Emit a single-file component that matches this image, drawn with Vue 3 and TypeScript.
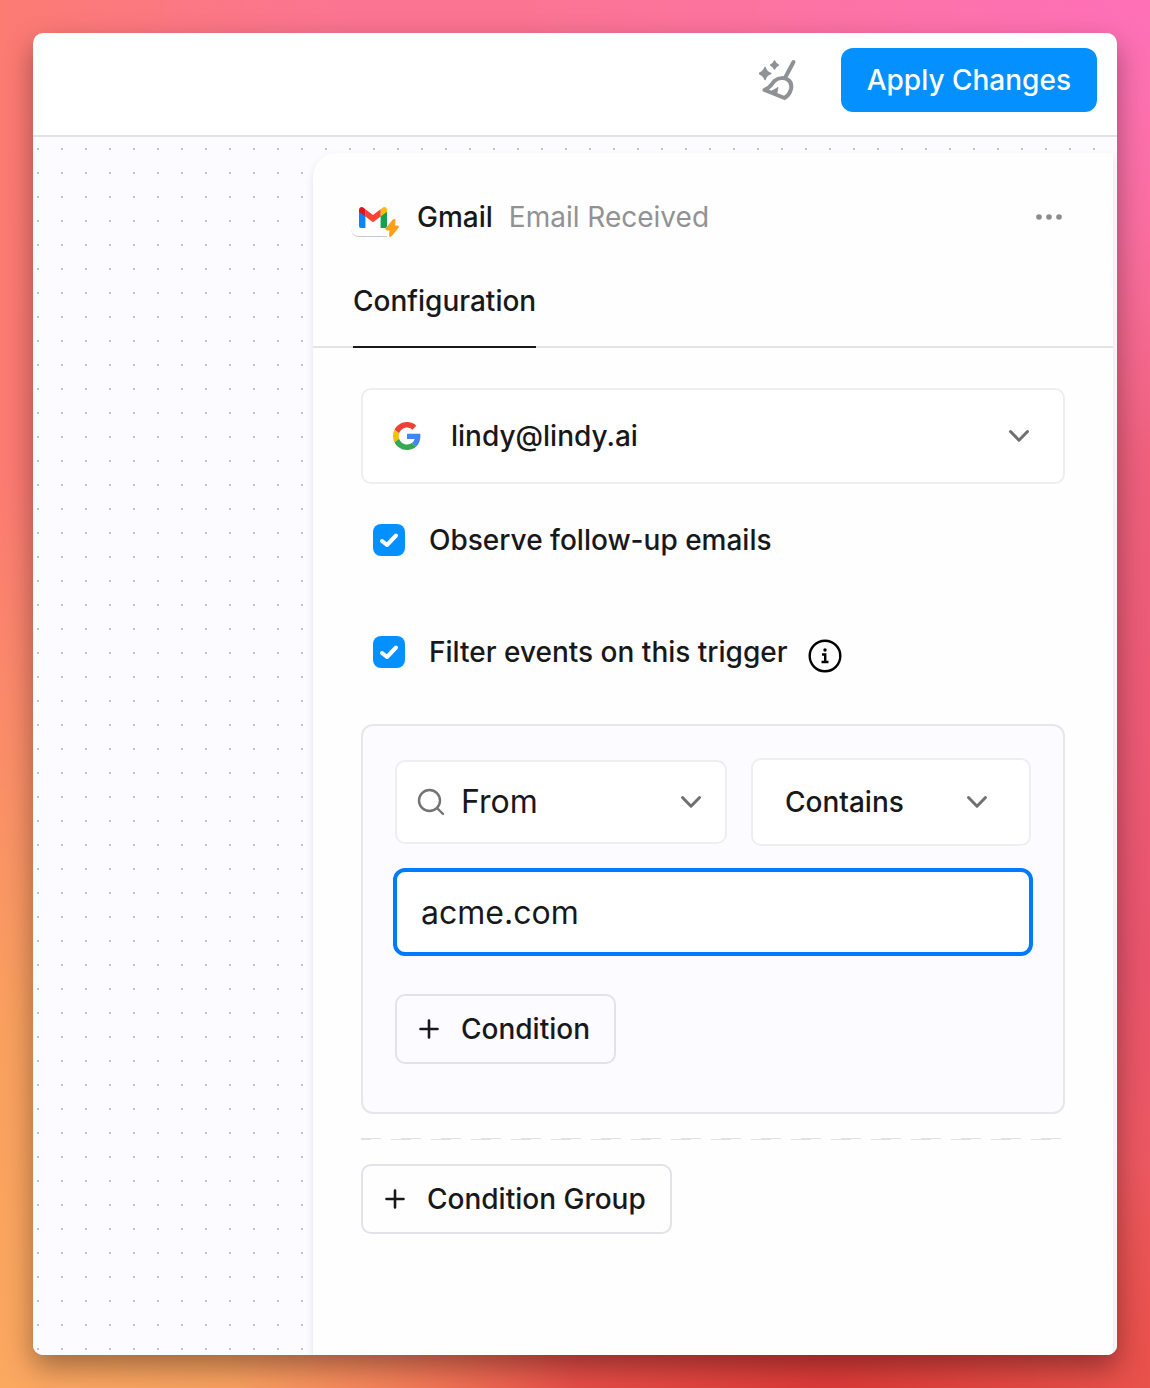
<script setup lang="ts">
import { ref } from 'vue'

const account = ref('lindy@lindy.ai')
const observeFollowUps = ref(true)
const filterEvents = ref(true)
const field = ref('From')
const operator = ref('Contains')
const value = ref('acme.com')
</script>

<template>
  <div class="page">
    <div class="window">
      <header class="topbar">
        <button class="icon-button" type="button" aria-label="Tidy up">
          <svg class="broom" viewBox="0 0 40 44" fill="none" stroke="currentColor" stroke-width="4" stroke-linecap="round" stroke-linejoin="round">
            <path d="M34.500 4 26.500 19" />
            <path d="M5.500 32C11.500 30 13 25 16 22.500C20 19.500 25.500 19.500 28.500 21.500C32 23.500 33 26.500 32 31C31 35 29 38 25.500 40Z" />
            <path d="M12 33.500 19 29.500 17.500 36.500Z" fill="currentColor" stroke-width="1" />
            <path d="M6 9.500Q7.400 13.900 11.800 15.500Q7.400 17 6 21.500Q4.400 17 0 15.500Q4.400 13.900 6 9.500Z" fill="currentColor" stroke-width="1.500" />
            <path d="M15.500 3Q16.600 5.900 19.300 7Q16.600 8.100 15.500 11Q14.300 8.100 11.700 7Q14.300 5.900 15.500 3Z" fill="currentColor" stroke-width="1.500" />
          </svg>
        </button>
        <button class="apply" type="button">Apply Changes</button>
      </header>

      <main class="canvas">
        <section class="panel">
          <div class="panel-head">
            <span class="app-icon">
              <svg class="gmail" viewBox="0 0 28 21">
                <path d="M0 4v15a2 2 0 0 0 2 2h4.400V8.500z" fill="#0a84ff" />
                <path d="M21.600 8.500V21H26a2 2 0 0 0 2-2V4z" fill="#12a150" />
                <path d="M21.600 2.200v7.300L28 4.800V3c0-2.700-2.700-3.700-4.500-2.300z" fill="#fbbc04" />
                <path d="M6.400 9.500V2.200L14 8l7.600-5.800v7.300L14 15.300z" fill="#ff4131" />
                <path d="M0 3v1.800l6.400 4.700V2.200L4.500.7C2.700-.7 0 .3 0 3z" fill="#e01515" />
              </svg>
              <svg class="bolt" viewBox="0 0 14 18">
                <path d="M8.500.4 1 9.300c-.6.800-.2 1.600.7 1.600H5l-.3 6.200c0 .8.700 1 1.200.4l7.300-8.900c.6-.8.200-1.600-.7-1.600H9.600L10 .9c0-.8-.9-1.200-1.500-.5z" fill="#ff9f1a" stroke="#ff9f1a" />
              </svg>
            </span>
            <h1 class="app-name">Gmail</h1>
            <span class="event-name">Email Received</span>
            <button class="more" type="button" aria-label="More options">
              <svg viewBox="0 0 26 6" fill="currentColor">
                <circle cx="3" cy="3" r="2.800" /><circle cx="13" cy="3" r="2.800" /><circle cx="23" cy="3" r="2.800" />
              </svg>
            </button>
          </div>

          <nav class="tabs">
            <button class="tab" type="button">Configuration</button>
          </nav>

          <div class="panel-body">
            <div class="select-box account">
              <svg class="google" viewBox="0 0 48 48">
                <path fill="#ea4335" d="M24 9.500c3.540 0 6.710 1.220 9.210 3.600l6.850-6.850C35.900 2.380 30.470 0 24 0 14.620 0 6.510 5.380 2.560 13.220l7.980 6.190C12.430 13.720 17.740 9.500 24 9.500z" />
                <path fill="#4285f4" d="M46.980 24.550c0-1.570-.15-3.090-.38-4.550H24v9.020h12.940c-.58 2.960-2.260 5.480-4.780 7.180l7.730 6c4.510-4.180 7.090-10.360 7.090-17.650z" />
                <path fill="#fbbc05" d="M10.530 28.590c-.48-1.450-.76-2.990-.76-4.590s.27-3.140.76-4.590l-7.980-6.190C.92 16.460 0 20.120 0 24c0 3.880.92 7.540 2.560 10.780l7.970-6.190z" />
                <path fill="#34a853" d="M24 48c6.480 0 11.930-2.130 15.890-5.810l-7.730-6c-2.150 1.450-4.920 2.300-8.160 2.300-6.260 0-11.570-4.220-13.470-9.910l-7.980 6.190C6.510 42.620 14.620 48 24 48z" />
              </svg>
              <select v-model="account" aria-label="Account">
                <option>lindy@lindy.ai</option>
              </select>
              <svg class="chevron" viewBox="0 0 22 14"><path d="M2.500 2.500 11 11.200 19.500 2.500" /></svg>
            </div>

            <label class="check">
              <input v-model="observeFollowUps" type="checkbox" />
              <span>Observe follow-up emails</span>
            </label>

            <div class="check-line">
              <label class="check">
                <input v-model="filterEvents" type="checkbox" />
                <span>Filter events on this trigger</span>
              </label>
              <button class="info" type="button" aria-label="About event filters">
                <svg viewBox="0 0 34 34" fill="none" stroke="currentColor" stroke-width="2.400">
                  <circle cx="17" cy="17" r="15.300" />
                  <path d="M14 15.500H17.200V23M13.500 23H20.500" />
                  <circle cx="17" cy="11" r="1.700" fill="currentColor" stroke="none" />
                </svg>
              </button>
            </div>

            <div class="group">
              <div class="rule">
                <div class="select-box field">
                  <svg class="search" viewBox="0 0 28 28"><circle cx="12.500" cy="12.500" r="10.500" /><path d="M20.500 20.500 26 26" /></svg>
                  <select v-model="field" aria-label="Field">
                    <option>From</option>
                  </select>
                  <svg class="chevron" viewBox="0 0 22 14"><path d="M2.500 2.500 11 11.200 19.500 2.500" /></svg>
                </div>
                <div class="select-box operator">
                  <select v-model="operator" aria-label="Operator">
                    <option>Contains</option>
                  </select>
                  <svg class="chevron" viewBox="0 0 22 14"><path d="M2.500 2.500 11 11.200 19.500 2.500" /></svg>
                </div>
              </div>
              <input v-model="value" class="value" type="text" aria-label="Value" />
              <button class="add nested" type="button">
                <svg viewBox="0 0 20 20"><path d="M10 1.500v17M1.500 10h17" /></svg>
                Condition
              </button>
            </div>

            <hr class="divider" />

            <button class="add" type="button">
              <svg viewBox="0 0 20 20"><path d="M10 1.500v17M1.500 10h17" /></svg>
              Condition Group
            </button>
          </div>
        </section>
      </main>
    </div>
  </div>
</template>

<style>
body {
  margin: 0;
}
</style>

<style scoped>
* {
  box-sizing: border-box;
}

.page {
  display: flex;
  min-height: 100vh;
  padding: 33px;
  font-family: Inter, "Liberation Sans", sans-serif;
  font-size: 28px;
  font-weight: 500;
  line-height: 40px;
  color: #18181b;
  background:
    radial-gradient(ellipse 55% 32% at 100% 0%, #ff70b8 0%, rgba(255, 112, 184, 0) 100%),
    radial-gradient(ellipse 50% 66% at 0% 100%, #fba860 0%, #f9a05f 40%, rgba(249, 130, 100, 0) 100%),
    radial-gradient(ellipse 40% 22% at 72% 100%, #dc3a38 0%, rgba(220, 58, 56, 0) 100%),
    linear-gradient(90deg, #fc7b72 0%, rgba(252, 123, 114, 0) 30%),
    linear-gradient(180deg, #fb7592 0%, #ee5f7c 35%, #e9546c 70%, #ee5c52 100%);
}

button,
input,
select {
  margin: 0;
  font: inherit;
  color: inherit;
}

button {
  padding: 0;
  border: 0;
  background: none;
  cursor: pointer;
}

svg {
  display: block;
  flex: none;
}

.window {
  display: flex;
  flex: 1;
  flex-direction: column;
  min-width: 0;
  overflow: hidden;
  border-radius: 10px;
  background: #fff;
  box-shadow: 0 12px 28px rgba(0, 0, 0, 0.36);
}

.topbar {
  display: flex;
  align-items: flex-start;
  justify-content: flex-end;
  gap: 42px;
  height: 104px;
  padding: 15px 20px;
  border-bottom: 2px solid #e2e2e8;
}

.icon-button {
  display: flex;
  align-items: center;
  height: 64px;
  color: #8e9196;
}

.broom {
  width: 40px;
  height: 44px;
}

.apply {
  height: 64px;
  padding: 0 26px;
  border-radius: 12px;
  background: #0590ff;
  color: #fff;
}

.canvas {
  display: flex;
  flex: 1;
  padding: 16px 4px 0 280px;
  background: radial-gradient(circle at 12px 12px, #c2c2c9 0, #c2c2c9 1px, transparent 1px) -7px 0 / 24px 24px #fcfbff;
}

.panel {
  flex: 1;
  min-width: 0;
  border-radius: 24px 0 0 0;
  background: #fefefe;
  box-shadow: 0 4px 8px rgba(24, 24, 60, 0.1);
}

.panel-head {
  display: flex;
  align-items: center;
  height: 88px;
  padding: 40px 50px 0 40px;
}

.app-icon {
  position: relative;
  width: 44px;
  height: 40px;
  padding: 10px 6px;
  margin-right: 20px;
}

.app-icon::before {
  position: absolute;
  bottom: 0;
  left: -2px;
  width: 36px;
  height: 8px;
  border-bottom: 1px solid #c9c9d2;
  border-radius: 0 0 0 8px;
  content: "";
}

.gmail {
  width: 28px;
  height: 21px;
}

.bolt {
  position: absolute;
  right: -2px;
  bottom: 0;
  width: 14px;
  height: 18px;
}

.app-name {
  margin: 0 16px 0 0;
  font-size: 28px;
  font-weight: 500;
}

.event-name {
  font-weight: 400;
  color: #929294;
}

.more {
  margin-left: auto;
  color: #8c8c8c;
}

.more svg {
  width: 28px;
  height: 6px;
}

.tabs {
  display: flex;
  padding: 40px 40px 0;
  box-shadow: inset 0 -2px #e2e2e8;
}

.tab {
  height: 67px;
  padding-bottom: 25px;
  border-bottom: 2px solid #18181b;
}

.panel-body {
  display: flex;
  flex-direction: column;
  align-items: flex-start;
  padding: 40px 48px;
}

.select-box {
  position: relative;
  display: flex;
  align-items: center;
  border: 2px solid #eeeef2;
  border-radius: 10px;
  background: #fff;
}

.select-box svg {
  position: absolute;
  pointer-events: none;
}

.select-box select {
  width: 100%;
  height: 100%;
  border: 0;
  outline: 0;
  appearance: none;
  background: none;
}

.chevron {
  right: 33px;
  width: 22px;
  height: 14px;
  fill: none;
  stroke: #707072;
  stroke-width: 3;
  stroke-linecap: round;
  stroke-linejoin: round;
}

.account {
  width: 100%;
  height: 96px;
  margin-bottom: 40px;
}

.account select {
  padding: 0 80px 0 88px;
}

.google {
  left: 30px;
  width: 28px;
  height: 28px;
}

.check {
  display: flex;
  align-items: center;
  gap: 24px;
  height: 32px;
  padding-left: 12px;
}

.check input {
  width: 32px;
  height: 32px;
  border-radius: 8px;
  appearance: none;
  background: #d8d8de;
}

.check input:checked {
  background: #0590ff url("data:image/svg+xml,%3Csvg xmlns='http://www.w3.org/2000/svg' viewBox='0 0 32 32'%3E%3Cpath d='M9 17l5 4L23 11.500' fill='none' stroke='white' stroke-width='4' stroke-linecap='round' stroke-linejoin='round'/%3E%3C/svg%3E") center / 32px 32px;
}

.check-line {
  display: flex;
  align-items: center;
  gap: 20px;
  height: 40px;
  margin: 76px 0 52px;
}

.info {
  padding-top: 8px;
  color: #000;
}

.info svg {
  width: 34px;
  height: 34px;
}

.group {
  width: 100%;
  padding: 32px 30px 48px;
  border: 2px solid #e6e6eb;
  border-radius: 12px;
  background: #fcfbff;
}

.rule {
  display: flex;
  align-items: center;
  gap: 24px;
  padding: 0 2px;
}

.field {
  flex: 1;
  height: 84px;
  font-size: 32px;
  font-weight: 400;
}

.field select {
  padding: 0 60px 0 64px;
}

.field .chevron {
  right: 23px;
}

.search {
  left: 20px;
  width: 28px;
  height: 28px;
  fill: none;
  stroke: #737375;
  stroke-width: 2.400;
  stroke-linecap: round;
}

.operator {
  width: 280px;
  height: 88px;
}

.operator select {
  padding: 0 70px 0 32px;
}

.operator .chevron {
  right: 41px;
}

.value {
  display: block;
  width: 100%;
  height: 88px;
  margin: 22px 0 38px;
  padding: 0 24px;
  border: 4px solid #007bff;
  border-radius: 12px;
  outline: 0;
  background: #fff;
  font-size: 32px;
  font-weight: 400;
}

.add {
  display: flex;
  align-items: center;
  gap: 22px;
  height: 70px;
  padding: 0 24px 0 22px;
  border: 2px solid #e2e2e8;
  border-radius: 10px;
}

.add svg {
  width: 20px;
  height: 20px;
  fill: none;
  stroke: #18181b;
  stroke-width: 2.600;
  stroke-linecap: round;
}

.nested {
  margin-left: 2px;
}

.divider {
  width: 100%;
  height: 2px;
  margin: 24px 0;
  border: 0;
  background:
    linear-gradient(90deg, #e2e2e5 20px, transparent 20px) 0 0 / 40px 1px repeat-x,
    linear-gradient(90deg, #e2e2e5 20px, transparent 20px) -10px 1px / 40px 1px repeat-x;
}
</style>
